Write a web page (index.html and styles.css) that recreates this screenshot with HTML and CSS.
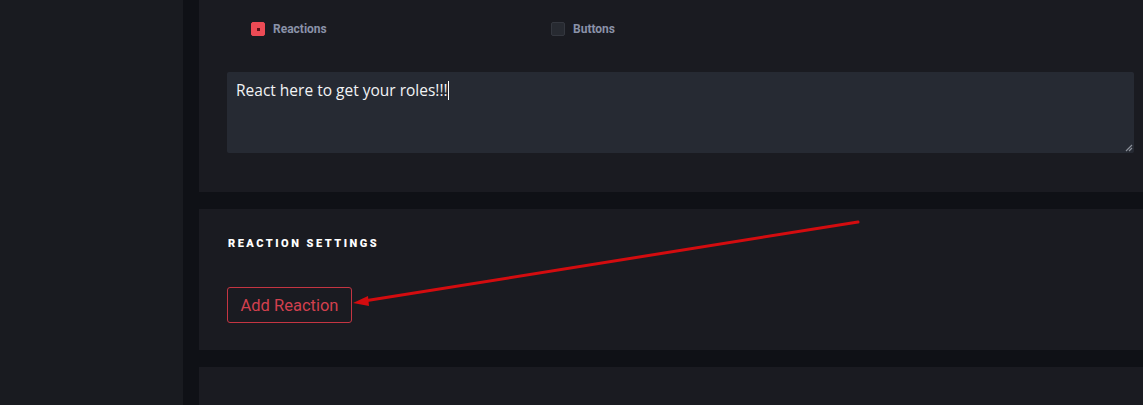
FILE: index.html
```html
<!DOCTYPE html>
<html>
<head>
<meta charset="utf-8">
<link rel="stylesheet" href="styles.css">
</head>
<body>
<div class="app">
  <aside class="sidebar"></aside>
  <main class="main">
    <section class="panel panel-top">
      <div class="type-row">
        <label class="check-item">
          <span class="box checked"><span class="dot"></span></span>
          <span class="check-label">Reactions</span>
        </label>
        <label class="check-item">
          <span class="box"></span>
          <span class="check-label">Buttons</span>
        </label>
      </div>
      <div class="message-box">
        <span class="message-text">React here to get your roles!!!</span><span class="caret"></span>
        <svg class="grip" width="9" height="9" viewBox="0 0 9 9"><path d="M8 2 L2 8 M8 5 L5 8" stroke="#8a8f99" stroke-width="1.2"/></svg>
      </div>
    </section>
    <section class="panel panel-settings">
      <h2 class="section-title">REACTION SETTINGS</h2>
      <button class="btn-outline">Add Reaction</button>
    </section>
    <section class="panel panel-bottom"></section>
  </main>
</div>
<svg class="annotation" width="1143" height="405" viewBox="0 0 1143 405">
  <line x1="858" y1="222" x2="364" y2="301" stroke="#d30c0f" stroke-width="3" stroke-linecap="round"/>
  <polygon points="353,303 368,296 369,306" fill="#d30c0f"/>
</svg>
</body>
</html>
```

FILE: styles.css
```css
html, body {
  margin: 0;
  padding: 0;
  height: 100%;
  overflow: hidden;
  background: #0f1116;
}

.app {
  display: flex;
  gap: 16px;
  height: 405px;
  width: 1180px;
}

.sidebar {
  width: 183px;
  flex: 0 0 183px;
  background: #191b20;
}

.main {
  flex: 0 0 963px;
  display: flex;
  flex-direction: column;
  gap: 17px;
}

.panel {
  background: #1a1b21;
  box-sizing: border-box;
}

.panel-top {
  padding: 22px 28px 39px 28px;
}

.type-row {
  display: grid;
  grid-template-columns: 300px 300px;
  padding-left: 24px;
  height: 14px;
}

.check-item {
  display: flex;
  align-items: center;
  gap: 8px;
}

.box {
  width: 14px;
  height: 14px;
  box-sizing: border-box;
  border-radius: 2px;
  background: #272a31;
  border: 1px solid #34373f;
  display: flex;
  align-items: center;
  justify-content: center;
}

.box.checked {
  background: #ec4b55;
  border-color: #ec4b55;
}

.dot {
  width: 3px;
  height: 3px;
  background: #5a1118;
}

.check-label {
  font-family: "Roboto", "Liberation Sans", sans-serif;
  font-weight: 700;
  font-size: 12px;
  color: #8a92a8;
}

.message-box {
  position: relative;
  margin-top: 36px;
  height: 81px;
  width: 907px;
  box-sizing: border-box;
  background: #262a33;
  border-radius: 2px;
  padding: 7px 9px;
  font-family: "Open Sans", "Liberation Sans", sans-serif;
  font-size: 15.5px;
  color: #f2f3f5;
}

.caret {
  display: inline-block;
  width: 1px;
  height: 19px;
  background: #ffffff;
  vertical-align: -4px;
}

.grip {
  position: absolute;
  right: 1px;
  bottom: 1px;
}

.panel-settings {
  padding: 28px 28px 27px 28px;
  height: 141px;
}

.section-title {
  margin: 0 0 37px 1px;
  font-family: "Roboto", "Liberation Sans", sans-serif;
  font-weight: 900;
  font-size: 11px;
  letter-spacing: 2.5px;
  line-height: 13px;
  color: #ffffff;
}

.btn-outline {
  display: block;
  height: 36px;
  width: 125px;
  padding: 0;
  background: transparent;
  border: 1px solid #c43542;
  border-radius: 3px;
  font-family: "Roboto", "Liberation Sans", sans-serif;
  font-size: 16.5px;
  color: #d2404e;
}

.panel-bottom {
  flex: 1;
}

.annotation {
  position: absolute;
  left: 0;
  top: 0;
  pointer-events: none;
}
```
